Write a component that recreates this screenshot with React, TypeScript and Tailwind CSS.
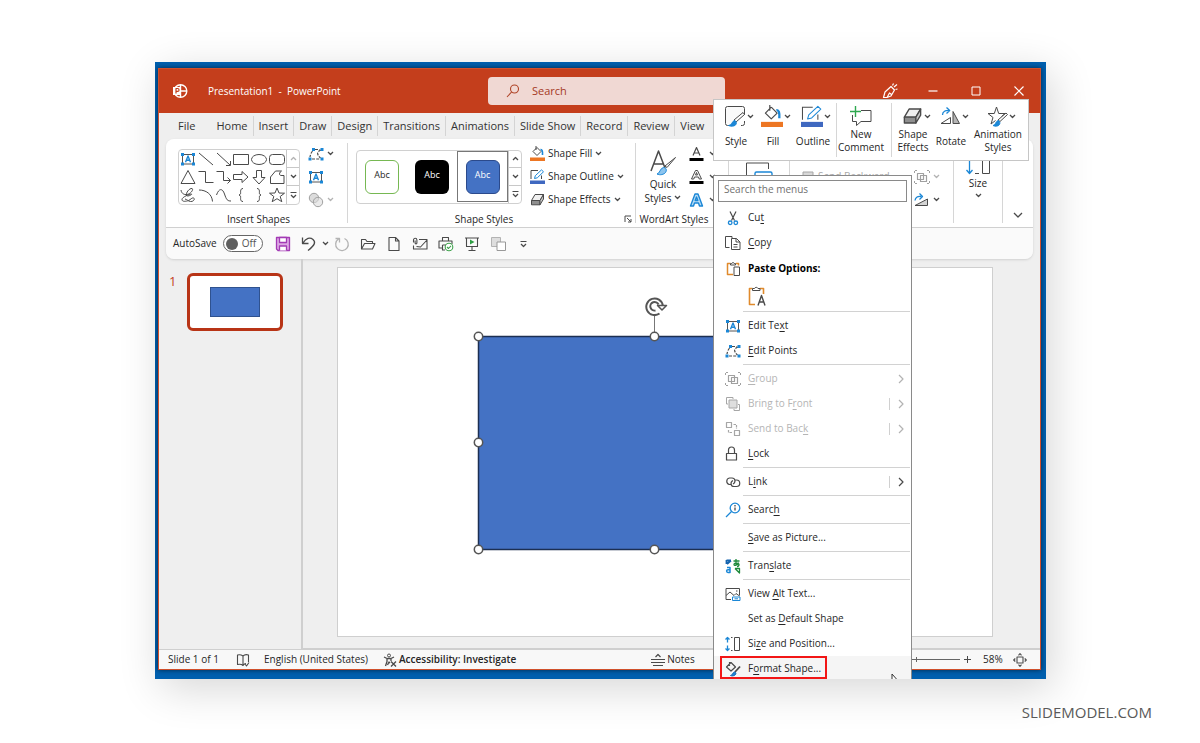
import React from 'react';

interface IconProps {
  w?: number;
  h?: number;
  color?: string;
  sw?: number;
  children: React.ReactNode;
}

const INK = '#4a4a4a';
const BLUE = '#1b87d6';
const MUTED = '#b3b3b3';

const Icon: React.FC<IconProps> = ({ w = 16, h = 16, color = INK, sw = 1, children }) => (
  <svg
    width={w}
    height={h}
    viewBox={`0 0 ${w} ${h}`}
    fill="none"
    stroke={color}
    strokeWidth={sw}
    strokeLinejoin="round"
    className="shrink-0"
    aria-hidden="true"
  >
    {children}
  </svg>
);

const Chevron = ({ color = INK }: { color?: string }) => (
  <Icon w={7} h={5} color={color} sw={1.3}><path d="M1 1l2.5 2.5L6 1" /></Icon>
);

const ChevronUp = ({ color = INK }: { color?: string }) => (
  <Icon w={7} h={5} color={color} sw={1.3}><path d="M1 4l2.5-2.5L6 4" /></Icon>
);

const MoreArrow = () => (
  <Icon w={7} h={8} sw={1.2}><path d="M0.5 1.5h6M1 4l2.5 2.5L6 4" /></Icon>
);

/* ---------- shared glyphs ---------- */

const TextBoxIcon = () => (
  <Icon>
    <path d="M2.5 3.5h11v9.5h-11z" stroke="#555" />
    <path d="M5.5 11.3L8 5 10.5 11.3M6.300 9.300h3.400" stroke={BLUE} strokeWidth="1.400" />
    <path d="M1 2h3v3H1zM12 2h3v3h-3zM1 11.500h3v3H1zM12 11.500h3v3h-3z" fill={BLUE} stroke="none" />
  </Icon>
);

const EditPointsIcon = () => (
  <Icon>
    <path d="M4.500 5c-1.500 2-2 3.500-2.500 6M7 3.500h5" strokeDasharray="3 1.500" strokeWidth="1.200" />
    <path d="M13 4c-4.500 2-4.500 4-.5 8M4 13h8" strokeDasharray="3 1.200" strokeWidth="1.200" />
    <path d="M4 2h3v3H4zM12.500 2h3v3h-3zM0.500 11.500h3v3h-3zM12.500 11.500h3v3h-3z" fill={BLUE} stroke="none" />
  </Icon>
);

const GroupIcon = () => (
  <Icon color="#a0a0a0">
    <path d="M3.500 4.500h6v6h-6zM6.500 6.500h6v6h-6z" strokeWidth="1.200" />
    <path d="M0.500 4V1.500H3M13 1.500h2.500V4M0.500 12v2.500H3M13 14.500h2.500V12" strokeDasharray="2 1" />
  </Icon>
);

const FillIcon = ({ big = false }: { big?: boolean }) => (
  <svg width={big ? 22 : 15} height={big ? 22 : 15} viewBox="0 0 15 15" fill="none" stroke={INK} strokeWidth={big ? 0.8 : 1} className="shrink-0" aria-hidden="true">
    <path d="M7 1.500l4 4-4 4-4-4 4-4M6 0v4" strokeLinejoin="round" />
    <path d="M10.500 3.500c1.700-.2 2.200 1.500 2 5.500" stroke={BLUE} strokeWidth="1.600" />
    <path d="M0 11.500h15v3.500H0z" fill="#ed7623" stroke="none" />
  </svg>
);

const OutlineIcon = ({ big = false }: { big?: boolean }) => (
  <svg width={big ? 22 : 15} height={big ? 22 : 15} viewBox="0 0 15 15" fill="none" stroke={INK} strokeWidth={big ? 0.7 : 1} className="shrink-0" aria-hidden="true">
    <path d="M8 1.500H1v8.500M11.500 6.500V10" />
    <path d="M4.500 9.500l.8-2.800L11.500.9l2 1.900-6.200 6z" stroke={BLUE} fill="#fff" strokeLinejoin="round" />
    <path d="M0 11.500h15v3.500H0z" fill="#3f68c0" stroke="none" />
  </svg>
);

const EffectsIcon = ({ big = false }: { big?: boolean }) => (
  <svg width={big ? 21 : 15} height={big ? 19 : 14} viewBox="0 0 15 14" fill="none" stroke={INK} strokeWidth="1" strokeLinejoin="round" className="shrink-0" aria-hidden="true">
    <path d="M5 1.500h8.500L10 7.500H1.500z" fill="#f0f0f0" />
    <path d="M1.500 7.500H10v4.300H1.500z" fill="#8f8f8f" />
    <path d="M10 7.500l3.500-6V6L10 11.800z" fill="#c8c8c8" />
  </svg>
);

const RotateIcon = () => (
  <Icon w={15} h={14}>
    <path d="M1 12.500h12.500V6z" fill="#d4d4d4" />
    <path d="M1 7.500C1.500 4 4 3 7.500 3.500M5.500 0.500l3 3-3 3" stroke={BLUE} strokeWidth="1.300" />
  </Icon>
);

const BigRotateIcon = () => (
  <Icon w={21} h={18}>
    <path d="M1 16.500h9.500V10.500z" />
    <path d="M13 4.500v12h6.500z" fill="#b5b5b5" />
    <path d="M2.500 8c0-3.500 3-5 7-4.500M6.500 0.500l3.200 3-3.200 3" stroke={BLUE} strokeWidth="1.300" />
  </Icon>
);

/* ---------- title bar ---------- */

const TitleBar = () => (
  <header className="flex h-11 items-center bg-[#c43e1c] pl-[13px] text-white">
    <Icon color="#fff" sw={1.4}>
      <circle cx="8.500" cy="8" r="6.300" />
      <path d="M8.500 2v12M8.500 8H15" />
      <path d="M1 4h8v8H1z" fill="#fff" stroke="none" />
      <path d="M4 10.500v-5h1.600a1.400 1.400 0 010 2.900H4" stroke="#c43e1c" strokeWidth="1.200" />
    </Icon>
    <h1 className="ml-5 w-[280px] whitespace-pre text-[10px] font-medium">{'Presentation1  -  PowerPoint'}</h1>
    <label className="flex h-7 w-[237px] items-center rounded bg-[#f0d8d3] pl-[18px]">
      <Icon w={14} h={14} color="#b04427" sw={1.1}>
        <circle cx="8.500" cy="5" r="4" />
        <path d="M5.600 8L1 13" />
      </Icon>
      <input aria-label="Search" placeholder="Search" className="ml-3 w-40 bg-transparent text-[11px] outline-none placeholder:text-[#a5391f]" />
    </label>
    <div className="ml-auto flex items-center">
      <button aria-label="Coming soon" className="grid h-8 w-[42px] place-items-center">
        <Icon color="#fff" sw={1.2}>
          <path d="M1.500 14.500l1.500-5.500 6-5.500 3.500 3.500-3.500 6-4 1.500zM5 14.500l2.500-4.500 2 1.500" />
          <path d="M10.500 2.500l1-2M12 4l3-2.500M13.500 6.500l2-.500" />
        </Icon>
      </button>
      <button aria-label="Minimize" className="grid h-8 w-[43px] place-items-center">
        <Icon w={10} h={10} color="#fff" sw={1.2}><path d="M0.500 5h9" /></Icon>
      </button>
      <button aria-label="Maximize" className="grid h-8 w-[43px] place-items-center">
        <Icon w={10} h={10} color="#fff"><path d="M1 1h8v8H1z" /></Icon>
      </button>
      <button aria-label="Close" className="grid h-8 w-[43px] place-items-center">
        <Icon w={10} h={10} color="#fff" sw={1.2}><path d="M0.500 0.500l9 9M9.500 0.500l-9 9" /></Icon>
      </button>
    </div>
  </header>
);

const TABS = ['Home', 'Insert', 'Draw', 'Design', 'Transitions', 'Animations', 'Slide Show', 'Record', 'Review'];

const Tabs = () => (
  <nav className="flex h-[26px] items-center pl-[19px] text-[11px] text-[#333]">
    <button className="mr-4">File</button>
    {TABS.map((tab) => (
      <button key={tab} className="h-5 border-r border-[#d4d4d4] px-[5px]">{tab}</button>
    ))}
    <button className="px-[5px]">View</button>
  </nav>
);

/* ---------- ribbon ---------- */

const SHAPES: { name: string; d: React.ReactNode }[] = [
  { name: 'Line', d: <path d="M1 2l14 12" /> },
  { name: 'Arrow', d: <path d="M1 2l13 12M14.500 10v4.500h-4.500" /> },
  { name: 'Rectangle', d: <path d="M0.500 3.500h15v10h-15z" /> },
  { name: 'Oval', d: <ellipse cx="8" cy="8.500" rx="7.500" ry="5" /> },
  { name: 'Rounded rectangle', d: <rect x="0.500" y="3.500" width="15" height="10" rx="3" /> },
  { name: 'Triangle', d: <path d="M8 1.500l7 13H1z" /> },
  { name: 'Elbow connector', d: <path d="M0.500 2.500h7v11h8" /> },
  { name: 'Elbow arrow connector', d: <path d="M0.500 2.500h7v9h7M11.500 8.500l3 3-3 3" /> },
  { name: 'Right arrow', d: <path d="M0.500 5.500h8.500V2.500l6 5.500-6 5.500v-3H0.500z" /> },
  { name: 'Down arrow', d: <path d="M5.500 1.500h5v7h3.500L8 15 2 8.500h3.500z" /> },
  { name: 'Freeform shape', d: <path d="M1.500 14.500V8l5-6h6c-3 2-2.500 5 .5 4.500h2v8z" /> },
  { name: 'Scribble', d: <path d="M1 3c.5 4 4 5.500 7.500 4s5-5 3.500-5.500C9.500 1 5.500 6 6.500 8.500c1 1.500 6-1 5-1.500-2 0-9.500 3-9.500 5.500s4 2 6.500 1 3-3 5-2.500 0 4-3 3.500-3-2-5.500-2.500" /> },
  { name: 'Arc', d: <path d="M1 3c7 0 13 4 13.500 11.500" /> },
  { name: 'Curve', d: <path d="M0.500 8c2.500-7 6-7 8-1s3 7 6.500 7" /> },
  { name: 'Left brace', d: <path d="M10 1.500c-3.500 0-2 4.500-2.500 5.500L6 8l1.500 1c.5 1.500-1 5.500 2.500 5.500" /> },
  { name: 'Right brace', d: <path d="M6 1.500c3.500 0 2 4.500 2.500 5.500L10 8 8.500 9c-.5 1.500 1 5.500-2.500 5.500" /> },
  { name: 'Star', d: <path d="M8 1l2 5 5.500.2-4.300 3.300 1.600 5.200L8 11.700l-4.800 3 1.600-5.200L.5 6.200 6 6z" /> },
];

const GalleryScroll = ({ topMuted = false }: { topMuted?: boolean }) => (
  <div className="flex w-[13px] flex-col divide-y divide-[#c8c8c8] border-l border-[#c8c8c8]">
    <button aria-label="Row up" className="grid flex-1 place-items-center"><ChevronUp color={topMuted ? MUTED : INK} /></button>
    <button aria-label="Row down" className="grid flex-1 place-items-center"><Chevron /></button>
    <button aria-label="More" className="grid flex-1 place-items-center"><MoreArrow /></button>
  </div>
);

const Group = ({ label, className, children }: { label?: React.ReactNode; className: string; children: React.ReactNode }) => (
  <section className={`flex flex-col pt-[3px] ${className}`}>
    <div className="flex h-[69px] items-center">{children}</div>
    <div className="flex h-4 items-center justify-center">{label}</div>
  </section>
);

const Divider = () => <div className="my-1 w-px shrink-0 bg-[#d6d6d6]" />;

const SmallRow = ({ label, children }: { label: string; children: React.ReactNode }) => (
  <button className="flex h-[23px] items-center gap-[3px]">
    {children}
    <span>{label}</span>
    <Chevron />
  </button>
);

const Ribbon = () => (
  <div className="flex h-[88px] bg-white text-[10px] text-[#262626]">
    <Group label="Insert Shapes" className="w-[181px] pl-3 pr-2">
      <div className="flex h-[56px] w-[122px] rounded border border-[#d0d0d0]">
        <div className="grid flex-1 grid-cols-6 place-items-center">
          <button aria-label="Text box"><TextBoxIcon /></button>
          {SHAPES.map((s) => (
            <button key={s.name} aria-label={s.name}><Icon>{s.d}</Icon></button>
          ))}
        </div>
        <GalleryScroll topMuted />
      </div>
      <div className="ml-2 flex flex-col">
        <button aria-label="Edit shape" className="flex h-[23px] items-center gap-[3px]"><EditPointsIcon /><Chevron /></button>
        <button aria-label="Draw text box" className="flex h-[23px] items-center"><TextBoxIcon /></button>
        <button aria-label="Merge shapes" className="flex h-[23px] items-center gap-[3px]">
          <Icon color="#a0a0a0">
            <circle cx="6" cy="6" r="4.700" fill="#dcdcdc" />
            <circle cx="10" cy="10" r="4.700" fill="#dcdcdc" fillOpacity="0.600" />
          </Icon>
          <Chevron color={MUTED} />
        </button>
      </div>
    </Group>
    <Divider />
    <Group
      className="w-[287px] pl-2"
      label={
        <div className="flex w-full items-center">
          <span className="w-[256px] text-center">Shape Styles</span>
          <button aria-label="Format shape pane" className="ml-auto mr-[3px]">
            <Icon w={8} h={8}><path d="M1 7V1h6M3 3l4 4M7 4v3H4" /></Icon>
          </button>
        </div>
      }
    >
      <div className="flex h-[54px] w-[166px] rounded border border-[#d0d0d0]">
        <div className="flex flex-1 items-center text-[9px]">
          <button className="mx-2 size-[34px] rounded-md border border-[#76b852] pb-1">Abc</button>
          <button className="mx-2 size-[34px] rounded-md bg-black pb-1 text-white">Abc</button>
          <div className="grid size-[51px] place-items-center border border-[#777]">
            <button className="size-[34px] rounded-md border border-[#2b4a8c] bg-[#4472c4] pb-1 text-white">Abc</button>
          </div>
        </div>
        <GalleryScroll />
      </div>
      <div className="ml-2 flex flex-col">
        <SmallRow label="Shape Fill"><FillIcon /></SmallRow>
        <SmallRow label="Shape Outline"><OutlineIcon /></SmallRow>
        <SmallRow label="Shape Effects"><EffectsIcon /></SmallRow>
      </div>
    </Group>
    <Divider />
    <Group label="WordArt Styles" className="w-[92px] pr-4">
      <button className="ml-2 flex w-[38px] shrink-0 flex-col items-center leading-[14px]">
        <Icon w={28} h={28} sw={1.5}>
          <path d="M2 22L9.500 2 16 19M5 15h9.500" />
          <path d="M26.500 8.500l-8.500 10-2-1.500z" fill="#fff" strokeWidth="1" />
          <path d="M8 25c3-.5 3-6 6.500-6.500 3 0 3.500 3 2 5s-5.500 3-8.500 1.500z" fill="#8cc4ee" stroke={BLUE} strokeWidth="1" />
        </Icon>
        <span>Quick</span>
        <span className="flex items-center gap-[3px]">Styles <Chevron /></span>
      </button>
      <div className="ml-[7px] flex flex-col">
        <button aria-label="Text fill" className="flex h-[23px] items-center gap-[5px]">
          <Icon w={15}><path d="M4 9.500L7.500 1.500 11 9.500M5 7h5" strokeWidth="1.200" /><path d="M0.500 12h14v3H0.500z" fill="#000" stroke="none" /></Icon>
          <Chevron />
        </button>
        <button aria-label="Text outline" className="flex h-[23px] items-center gap-[5px]">
          <Icon w={15}><path d="M2.500 10L6.500 1.500h2l4 8.500h-2.300l-.700-2h-4l-.700 2zM6.500 6h2l-1-2.500z" /><path d="M0.500 12h14v3H0.500z" fill="#000" stroke="none" /></Icon>
          <Chevron />
        </button>
        <button aria-label="Text effects" className="flex h-[23px] items-center gap-[5px]">
          <Icon w={15} color={BLUE} sw={1.4}><path d="M1.500 14L6 2h3l4.500 12h-3l-1-3h-4l-1 3zM6.200 8.500h2.600L7.500 5z" fill="#b8dcf5" /></Icon>
          <Chevron />
        </button>
      </div>
    </Group>
    <Divider />
    <Group label="" className="w-[60px]">
      <button aria-label="Alt text" className="ml-4">
        <Icon w={30} h={30}>
          <path d="M8 16.500H1.500V1h22v6" />
          <rect x="10" y="10" width="17" height="12" rx="1.500" stroke={BLUE} strokeWidth="1.400" />
          <path d="M13 14.500h11M13 17.500h11" />
        </Icon>
      </button>
    </Group>
    <Divider />
    <Group label="" className="flex-1 pl-3">
      <button className="flex items-center gap-1 text-[#a6a6a6]">
        <Icon w={12} h={12} color="#a6a6a6"><path d="M1 1h10v10H1z" fill="#d8d8d8" /></Icon>
        Send Backward
      </button>
      <div className="ml-auto flex w-[39px] flex-col">
        <div className="h-[23px]" />
        <button aria-label="Group objects" className="flex h-[23px] items-center gap-[3px]"><GroupIcon /><Chevron color={MUTED} /></button>
        <button aria-label="Rotate objects" className="flex h-[23px] items-center gap-1"><RotateIcon /><Chevron /></button>
      </div>
    </Group>
    <Divider />
    <Group label="" className="w-[48px]">
      <button className="mx-auto flex flex-col items-center">
        <Icon w={26} h={22}>
          <path d="M4.500 1v17M1.500 15l3 3.500 3-3.500" stroke={BLUE} strokeWidth="1.300" />
          <path d="M10 18.500h4M17.500 1.500h7v17h-7z" />
        </Icon>
        <span className="leading-3">Size</span>
        <span className="mt-1"><Chevron /></span>
      </button>
    </Group>
    <Divider />
    <button aria-label="Collapse ribbon" className="flex w-[30px] items-end justify-center pb-2">
      <Icon w={10} h={7} sw={1.3}><path d="M1 1l4 4 4-4" /></Icon>
    </button>
  </div>
);

const QUICK: { name: string; icon: React.ReactNode }[] = [
  {
    name: 'Repeat',
    icon: <Icon color={MUTED} sw={1.3}><path d="M10.500 2.500a6.300 6.300 0 11-6 .500M1.500 2.500h4v4" /></Icon>,
  },
  {
    name: 'Open',
    icon: <Icon sw={1.1}><path d="M1.500 13V3.500h4l1.500 2h5.500v2M1.500 13l3-5.500h10.500L12.500 13z" /></Icon>,
  },
  {
    name: 'New',
    icon: <Icon sw={1.1}><path d="M3 1.500h6.500l3.500 3.500v9.500H3zM9.500 1.500V5H13" /></Icon>,
  },
  {
    name: 'Email',
    icon: (
      <Icon sw={1.1}>
        <path d="M7 3.500h8v9.500H1.500V9.500M4.500 10.500l4 .5 6.500-7" />
        <path d="M1.500 6.500V4a1.700 1.700 0 013.400 0v3a.9.9 0 01-1.800 0V4.500" />
      </Icon>
    ),
  },
  {
    name: 'Quick print',
    icon: (
      <Icon sw={1.1}>
        <path d="M4.500 5V1.500h6V5M4 12H1V5h13v3M4.500 9h5M4.500 9v5H7" />
        <circle cx="11" cy="11" r="3.800" fill="#fff" stroke="#3fa34d" />
        <path d="M9 11l1.500 1.500L13 9.800" stroke="#3fa34d" />
      </Icon>
    ),
  },
  {
    name: 'Present',
    icon: (
      <Icon sw={1.1}>
        <path d="M1 2h14M2.500 2v8.500h11V2M8 10.500v4M4.500 14.500h7" />
        <path d="M6 3.500v5L10.500 6z" fill="#2f9e44" stroke="none" />
      </Icon>
    ),
  },
  {
    name: 'Arrange',
    icon: (
      <Icon color={MUTED}>
        <path d="M1.500 1.500h9v9h-9z" fill="#dedede" />
        <path d="M7 6h8.500v8.500H7z" fill="#fff" stroke="#999" />
      </Icon>
    ),
  },
];

const QuickAccess = () => (
  <div className="flex h-8 items-center border-t border-[#d0d0d0] bg-[#fafafa] pl-[7px] text-[10px] text-[#262626]">
    <label className="flex items-center gap-[6px] pr-[7px]">
      AutoSave
      <input type="checkbox" className="sr-only" />
      <span className="flex h-[17px] w-10 items-center gap-1 rounded-full border border-[#666] bg-white pl-[2px] text-[#555]">
        <span className="size-3 rounded-full bg-[#5f5f5f]" />
        Off
      </span>
    </label>
    <button aria-label="Save" className="grid w-[26px] place-items-center">
      <Icon color="#a33bb5" sw={1.3}>
        <path d="M1.500 1.500h13v13H3l-1.500-1.500z" fill="#dca8e4" />
        <path d="M4.500 1.500h7v5h-7zM4.500 14.500v-4.500h7v4.500" fill="#fff" />
      </Icon>
    </button>
    <button aria-label="Undo" className="grid w-[26px] place-items-center">
      <Icon sw={1.3}><path d="M1.500 1.500V7.500h6M2 7C5 2 9 1 12 3.500s2 5.500-5 11" /></Icon>
    </button>
    <button aria-label="Undo history"><Chevron /></button>
    <div className="flex">
      {QUICK.map((q) => (
        <button key={q.name} aria-label={q.name} className="grid w-[26px] place-items-center">{q.icon}</button>
      ))}
      <button aria-label="Customize toolbar" className="grid w-[26px] place-items-center"><MoreArrow /></button>
    </div>
  </div>
);

/* ---------- slides ---------- */

const HANDLES = [[9, 39], [185, 39], [361, 39], [9, 145], [361, 145], [9, 252], [185, 252], [361, 252]];

const Workspace = () => (
  <main className="flex">
    <aside className="flex w-[144px] shrink-0 border-r-2 border-[#cfcfcf] pl-[10px] pt-[14px]">
      <span className="w-[18px] text-[13px] leading-4 text-[#c43e1c]">1</span>
      <button aria-label="Slide 1" className="grid h-[58px] w-[96px] place-items-center rounded-md border-3 border-[#b83416] bg-white">
        <span className="h-[30px] w-[50px] border border-[#2f528f] bg-[#4472c4]" />
      </button>
    </aside>
    <div className="flex-1 border-b border-[#cfcfcf] pb-[11px] pl-[34px] pr-[47px] pt-2">
      <div className="relative h-[370px] border border-[#cfcfcf] bg-white">
        <svg width="372" height="264" viewBox="0 0 372 264" className="absolute left-[131px] top-[29px]" aria-hidden="true">
          <path d="M9.500 39.500h352v213h-352z" fill="#4472c4" stroke="#1c2f52" strokeWidth="1.500" />
          <path d="M185.500 18v18" stroke="#777" />
          <g fill="none" stroke="#555" strokeWidth="2">
            <path d="M190.500 16.500A8.300 8.300 0 11193.800 8.500" />
            <path d="M186.500 13.500A4.300 4.300 0 11189.500 7.500" />
            <path d="M188.500 8.500h9l-4.500 4.500z" strokeWidth="1.500" fill="#fff" strokeLinejoin="round" />
          </g>
          {HANDLES.map(([x, y]) => (
            <circle key={`${x}-${y}`} cx={x + 0.5} cy={y + 0.5} r="4.200" fill="#fff" stroke="#555" strokeWidth="1.500" />
          ))}
        </svg>
      </div>
    </div>
  </main>
);

const StatusBar = () => (
  <footer className="flex h-5 items-center border-t border-[#cfcfcf] bg-[#f8f8f8] pl-[9px] pr-[13px] text-[10px] text-[#262626]">
    <span className="w-[68px]">Slide 1 of 1</span>
    <button aria-label="Spelling" className="mr-[14px]">
      <Icon w={14} h={14} sw={1.1}><path d="M7 3c-2-1.500-4-1.500-5.500-1v9.500c2-.5 4-.5 5.500 1 1-1.500 2-2 3-2M7 3c1.500-1.500 4-1.500 5.500-1v7M7 3v9M9 11l1.500 2L13 9.500" /></Icon>
    </button>
    <span className="w-[119px]">English (United States)</span>
    <button className="flex items-center gap-[2px] font-semibold">
      <Icon w={14} h={14}>
        <circle cx="6" cy="2.500" r="1.500" />
        <path d="M1 4l3 1.500v3L2.500 13M11 4L8 5.500v2.500M4.500 5.500h3M4.500 12L6 9l1 1M8 8.500l5 5M13 8.500l-5 5" strokeWidth="1.300" />
      </Icon>
      Accessibility: Investigate
    </button>
    <button className="ml-[135px] flex items-center gap-[2px] font-medium">
      <Icon w={14} h={14} sw={1.2}><path d="M0 6.500h14M0 9.500h14M2 12.500h10M4.500 4L7 1.500 9.500 4" /></Icon>
      Notes
    </button>
    <div className="ml-auto flex items-center">
      <div className="relative flex w-[88px] items-center">
        <input
          type="range"
          aria-label="Zoom"
          defaultValue={30}
          className="h-px w-full appearance-none bg-[#666] [&::-webkit-slider-thumb]:h-3 [&::-webkit-slider-thumb]:w-1 [&::-webkit-slider-thumb]:appearance-none [&::-webkit-slider-thumb]:bg-[#555]"
        />
        <span className="absolute left-1/2 h-[5px] w-px bg-[#666]" />
      </div>
      <button aria-label="Zoom in" className="ml-1"><Icon w={7} h={7}><path d="M0 3.500h7M3.500 0v7" /></Icon></button>
      <span className="ml-3 w-[30px]">58%</span>
      <button aria-label="Fit to window">
        <Icon w={14} h={14} sw={1.1}><path d="M4 4h6v6H4zM5.500 2.300L7 .700l1.500 1.600M5.500 11.700L7 13.300l1.500-1.600M2.300 5.500L.700 7l1.600 1.500M11.700 5.500L13.300 7l-1.600 1.500" /></Icon>
      </button>
    </div>
  </footer>
);

/* ---------- floating mini toolbar ---------- */

const MiniButton = ({ label, className, chevron = true, children }: { label: string[]; className: string; chevron?: boolean; children: React.ReactNode }) => (
  <button className={`flex flex-col items-center ${className}`}>
    <span className={`flex h-[22px] items-center gap-px ${chevron ? 'pl-1' : 'pr-[2px]'}`}>
      {children}
      {chevron && <Chevron />}
    </span>
    <span className="flex h-7 flex-col items-center justify-center pr-[2px] leading-[13px]">
      {label.map((line) => <span key={line}>{line}</span>)}
    </span>
  </button>
);

const MiniToolbar = () => (
  <div className="absolute left-[558px] top-[37px] flex h-[62px] w-[316px] border border-[#c6c6c6] bg-white pt-[5px] text-[10px] text-[#262626]">
    <MiniButton label={['Style']} className="ml-[6px] w-[34px]">
      <Icon w={22} h={22}>
        <path d="M8 20.500H3.500a2 2 0 01-2-2v-15a2 2 0 012-2h15a2 2 0 012 2V10M20.500 16v2.500a2 2 0 01-2 2H17" fill="#fafafa" />
        <path d="M20.500 9.500l-8.500 7.500-2-2 9-7.500z" fill="#fff" />
        <path d="M4.500 20.500c3.500 0 3.500-4.500 6-5 2 .5 2.500 3 1 4.500s-5 1.500-7 .5z" fill={BLUE} stroke={BLUE} />
      </Icon>
    </MiniButton>
    <MiniButton label={['Fill']} className="ml-[2px] w-[36px]"><FillIcon big /></MiniButton>
    <MiniButton label={['Outline']} className="w-[44px]"><OutlineIcon big /></MiniButton>
    <div className="-mt-[2px] mb-[3px] w-px bg-[#d6d6d6]" />
    <MiniButton label={['New', 'Comment']} className="w-[50px]" chevron={false}>
      <Icon w={22} h={22}>
        <path d="M11 5.500h10v11H11l-4.500 4v-4h-4V10" />
        <path d="M0 6.500h11M5.500 1v11" stroke="#2fa84f" strokeWidth="1.400" />
      </Icon>
    </MiniButton>
    <div className="-mt-[2px] mb-[3px] ml-[4px] w-px bg-[#d6d6d6]" />
    <MiniButton label={['Shape', 'Effects']} className="ml-[5px] w-[34px]"><EffectsIcon big /></MiniButton>
    <MiniButton label={['Rotate']} className="ml-[3px] w-[36px]"><BigRotateIcon /></MiniButton>
    <MiniButton label={['Animation', 'Styles']} className="ml-[3px] w-[52px]">
      <Icon w={22} h={22}>
        <path d="M9.500 15.500l-4.500 3.500 2-6.500-5-4h6.300L10.500 2l2.200 6.500h6.300l-3.500 3" />
        <path d="M21.500 9.500l-7.500 7-2-1.500 8-7z" fill="#fff" />
        <path d="M7 20.500c2.500 0 2.500-4 5-5 2 .5 2.500 3 1 4.500s-4 1.500-6 .5z" fill={BLUE} stroke={BLUE} />
      </Icon>
    </MiniButton>
  </div>
);

/* ---------- context menu ---------- */

interface Item {
  // the letter after "_" is the underlined access key
  label: string;
  icon?: React.ReactNode;
  disabled?: boolean;
  arrow?: boolean;
  split?: boolean;
}

const CutIcon = (
  <Icon>
    <path d="M5 1.500l4.500 9M11 1.500l-4.500 9" strokeWidth="1.200" />
    <circle cx="5.200" cy="12.800" r="1.800" stroke={BLUE} strokeWidth="1.300" />
    <circle cx="10.800" cy="12.800" r="1.800" stroke={BLUE} strokeWidth="1.300" />
  </Icon>
);

const CopyIcon = (
  <Icon>
    <path d="M4.500 12.500H0.500v-11h6.500V3" />
    <path d="M6.500 3.500h5l3.500 3.500v7.500H6.500zM11 3.500V7h4M8.500 9.500h4M8.500 12h4" />
  </Icon>
);

const PasteIcon = (
  <Icon>
    <path d="M7 13.500H1.500v-11h3M10 2.500h2.500v2" stroke="#e08a2c" strokeWidth="1.500" />
    <path d="M4.500 4V2.500h1.200a1.400 1.400 0 012.600 0h1.200V4zM8 6h5.500v8.500H8z" />
  </Icon>
);

const SECTIONS: Item[][] = [
  [
    { label: 'Edit Te_xt', icon: <TextBoxIcon /> },
    { label: '_Edit Points', icon: <EditPointsIcon /> },
  ],
  [
    { label: '_Group', icon: <GroupIcon />, disabled: true, arrow: true },
    {
      label: 'Bring to F_ront',
      disabled: true,
      arrow: true,
      split: true,
      icon: <Icon color="#a6a6a6"><path d="M4 4h8v8H4z" fill="#dedede" /><path d="M8 1.500H1.500V8H3M9 14.500h5.500V8.500H13M8 1.500V3M9 14.500V13" /></Icon>,
    },
    {
      label: 'Send to Bac_k',
      disabled: true,
      arrow: true,
      split: true,
      icon: <Icon color="#a6a6a6" sw={1.2}><path d="M1.500 1.500h5v5h-5zM9.500 9.500h5v5h-5z" /><path d="M8.500 3.500h3V8M3.500 9v2.500H8" strokeDasharray="2.500 1" /></Icon>,
    },
    { label: '_Lock', icon: <Icon sw={1.2}><path d="M1.500 7.500h10v6.500h-10zM3.500 7.500V4a3 3 0 016 0v3.500" /></Icon> },
  ],
  [
    {
      label: 'L_ink',
      arrow: true,
      split: true,
      icon: <Icon sw={1.2}><path d="M6.500 10.500H4.500a3.300 3.300 0 010-6.500H7c3.500 0 4 4.500 1 6M9.500 6h2a3.200 3.200 0 010 6.500H9c-3.500 0-4-4.500-1-6" /></Icon>,
    },
  ],
  [
    {
      label: 'Searc_h',
      icon: <Icon color={BLUE} sw={1.3}><circle cx="10" cy="6" r="4.800" /><path d="M6.500 9.500L1 15" /><path d="M10 5.500v3M10 3v1.500" stroke={INK} /></Icon>,
    },
  ],
  [{ label: '_Save as Picture...' }],
  [
    {
      label: 'Tran_slate',
      icon: (
        <Icon color={BLUE} sw={1.5}>
          <path d="M1.500 2.500h4.500M1.500 2v4M2 6l4-3.500" stroke="#1463ae" strokeWidth="1.800" />
          <path d="M2 9.500h3v5H3a1.300 1.300 0 010-2.800h2" />
          <path d="M8.500 3h6M11 1v6M13.500 4.500C13 7 9 8.500 9 6.500s5-1.500 5 0-1 2-2 2M10 10.500h4.500v4.500L10 10.500" stroke="#1f8a3b" strokeWidth="1.300" />
        </Icon>
      ),
    },
  ],
  [
    {
      label: 'View _Alt Text...',
      icon: (
        <Icon>
          <path d="M6 13.500H1v-11h13.500v7M1 9.500L5 6l4 3.500 2-2 3.500 2.500M11 5h1.500" />
          <path d="M7.500 11h7.500v3.500H7.500zM9.500 12.800h3.500" stroke={BLUE} />
        </Icon>
      ),
    },
    { label: 'Set as _Default Shape' },
    {
      label: 'Si_ze and Position...',
      icon: (
        <Icon>
          <path d="M2.500 1.500v5M0.500 3.500l2-2 2 2M2.500 9.500v5M0.500 12.500l2 2 2-2" stroke={BLUE} strokeWidth="1.300" />
          <path d="M9.500 1.500H14.500v13H9.500zM6 1.500h1.500M6 14.500h1.500" />
        </Icon>
      ),
    },
  ],
];

const Mnemonic = ({ text }: { text: string }) => {
  const [before, after] = text.split('_');
  return (
    <span>
      {before}
      <u className="underline-offset-2">{after[0]}</u>
      {after.slice(1)}
    </span>
  );
};

const MenuItem: React.FC<{ item: Item }> = ({ item }) => (
  <button
    role="menuitem"
    disabled={item.disabled}
    className="flex h-[25px] w-full items-center pl-[11px] pr-[7px] disabled:text-[#b5b5b5]"
  >
    <span className="mr-[7px] size-4">{item.icon}</span>
    <Mnemonic text={item.label} />
    {item.arrow && (
      <span className="ml-auto flex items-center gap-2">
        {item.split && <span className="h-3 w-px bg-[#d0d0d0]" />}
        <Icon w={6} h={10} color={item.disabled ? MUTED : INK} sw={1.2}><path d="M1 1l4 4-4 4" /></Icon>
      </span>
    )}
  </button>
);

const ContextMenu = () => (
  <div role="menu" className="absolute left-[558px] top-[113px] w-[199px] border border-[#8a8a8a] bg-white pt-1 text-[10px] text-[#262626]">
    <input
      aria-label="Search the menus"
      placeholder="Search the menus"
      className="mx-1 mb-[3px] block h-[22px] w-[189px] border border-[#8a8a8a] px-[5px] pb-1 outline-none placeholder:text-[#707070]"
    />
    <MenuItem item={{ label: 'Cu_t', icon: CutIcon }} />
    <MenuItem item={{ label: '_Copy', icon: CopyIcon }} />
    <div className="flex h-[27px] items-center pl-[12px] font-bold text-black">
      <span className="mr-[6px] size-4">{PasteIcon}</span>
      Paste Options:
    </div>
    <button aria-label="Keep text only" className="ml-[34px] flex h-7 items-center">
      <Icon w={20} h={22}>
        <path d="M7 19.500H1.500v-16h3M12 3.500h3.500V9" stroke="#e08a2c" strokeWidth="1.600" />
        <path d="M4.500 5.500V3.500h2a1.900 1.900 0 013.500 0h2v2z" fill="#fff" />
        <path d="M10 20.500l3.500-10 3.500 10M11.200 17h4.700" strokeWidth="1.400" />
      </Icon>
    </button>
    {SECTIONS.map((items, i) => (
      <div key={i}>
        <div className="my-px ml-[29px] mr-px h-px bg-[#d2d2d2]" />
        {items.map((item) => <MenuItem key={item.label} item={item} />)}
      </div>
    ))}
    <div className="relative bg-[#f5f5f5] pb-2">
      <MenuItem
        item={{
          label: 'F_ormat Shape...',
          icon: (
            <Icon>
              <path d="M6 1.500l4.500 4.500L6 10 1.500 6 6 1.500M4.500 1v4" strokeWidth="1.200" />
              <path d="M15 5.500L10 11" strokeWidth="1.800" />
              <path d="M5.500 14.500c2 0 2-3 4-3.500 1.500 0 2 2 .5 3s-3 1.200-4.500.5z" fill={BLUE} stroke="#1668b5" />
            </Icon>
          ),
        }}
      />
      <div className="pointer-events-none absolute left-[6px] top-0 h-[23px] w-[107px] border-2 border-[#f21616]" />
      <svg width="10" height="14" viewBox="0 0 10 14" className="absolute left-[177px] top-[17px]" aria-hidden="true">
        <path d="M1 1v12l3-3h5z" fill="#fff" stroke="#333" />
      </svg>
    </div>
  </div>
);

const App = () => (
  <div className="min-h-screen overflow-hidden bg-white font-['Open_Sans','Noto_Sans',sans-serif]">
    <div className="pl-[155px] pr-[154px] pt-[62px]">
      <div className="bg-[#005fae] shadow-[6px_10px_40px_rgba(0,0,0,0.16)]">
        <div className="relative overflow-hidden pb-[9px] pl-[3px] pr-[5px] pt-[6px]">
          <div className="border border-[#d0502c] bg-[#efefef] shadow-[0_0_5px_rgba(0,0,0,0.6)]">
            <TitleBar />
            <Tabs />
            <div className="ml-[7px] mr-[7px] overflow-hidden rounded-lg shadow-sm">
              <Ribbon />
              <QuickAccess />
            </div>
            <Workspace />
            <StatusBar />
          </div>
          <MiniToolbar />
          <ContextMenu />
        </div>
      </div>
    </div>
    <p className="mr-12 mt-[23px] text-right text-[15px] leading-5 text-[#595959]">SLIDEMODEL.COM</p>
  </div>
);

export default App;
